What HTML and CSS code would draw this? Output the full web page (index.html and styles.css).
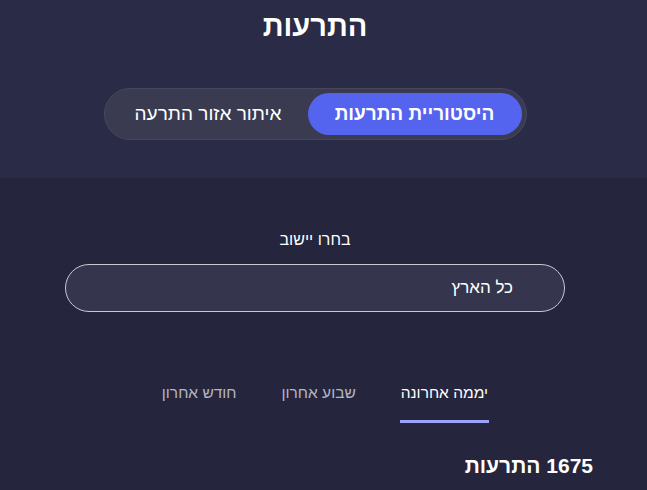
FILE: index.html
```html
<!DOCTYPE html>
<html lang="he" dir="rtl">
<head>
    <meta charset="UTF-8">
    <meta name="viewport" content="width=device-width, initial-scale=1.0">
    <title>התרעות</title>
    <link rel="stylesheet" href="styles.css">
</head>

<body>
    <header class="top">
        <h1>התרעות</h1>
        <div class="switch">
            <a href="#" class="switch-btn active">היסטוריית התרעות</a>
            <a href="#" class="switch-btn">איתור אזור התרעה</a>
        </div>
    </header>

    <main class="content">
        <label class="city-label" for="city">בחרו יישוב</label>
        <div class="city-box" id="city">כל הארץ</div>

        <ul class="periods">
            <li class="active">יממה אחרונה</li>
            <li>שבוע אחרון</li>
            <li>חודש אחרון</li>
        </ul>

        <h2 class="count">1675 התרעות</h2>
    </main>
</body>
</html>
```

FILE: styles.css
```css
body {
    font-family: "Liberation Sans", Arial, sans-serif;
    background-color: #25263e;
    color: #fff;
    margin: 0;
    padding: 0;
    height: 490px;
    overflow: hidden;
}

.top {
    background-color: #2a2b46;
    height: 178px;
    padding-right: 17px;
    display: flex;
    flex-direction: column;
    align-items: center;
}

h1 {
    margin: 8px 0 0;
    font-size: 29px;
    font-weight: 700;
    line-height: 36px;
}

.switch {
    margin-top: 44px;
    display: flex;
    width: 413px;
    height: 42px;
    padding: 4px;
    background-color: #3a3b51;
    border: 1px solid #46475d;
    border-radius: 26px;
}

.switch-btn {
    flex: 1;
    display: flex;
    align-items: center;
    justify-content: center;
    color: #fff;
    text-decoration: none;
    font-size: 19px;
    border-radius: 21px;
}

.switch-btn.active {
    flex: 0 0 214px;
    background-color: #5564ef;
    font-weight: 700;
}

.content {
    padding-right: 17px;
    display: flex;
    flex-direction: column;
    align-items: center;
}

.city-label {
    margin-top: 52px;
    font-size: 16px;
    line-height: 20px;
}

.city-box {
    margin-top: 14px;
    width: 447px;
    height: 46px;
    padding-right: 51px;
    border: 1px solid #c9c9d2;
    border-radius: 24px;
    background-color: #35364d;
    display: flex;
    align-items: center;
    font-size: 17px;
}

.periods {
    list-style-type: none;
    margin: 71px 141px 0 0;
    padding: 0;
    display: flex;
    gap: 43px;
    align-self: flex-start;
}

.periods li {
    font-size: 15.5px;
    line-height: 20px;
    color: #b4b5c3;
    padding: 0 1px 17px;
    border-bottom: 3px solid transparent;
}

.periods li.active {
    color: #fff;
    border-bottom-color: #9ca2f8;
}

.count {
    align-self: flex-start;
    margin: 31px 37px 0 0;
    font-size: 21px;
    line-height: 24px;
    font-weight: 700;
}
```
